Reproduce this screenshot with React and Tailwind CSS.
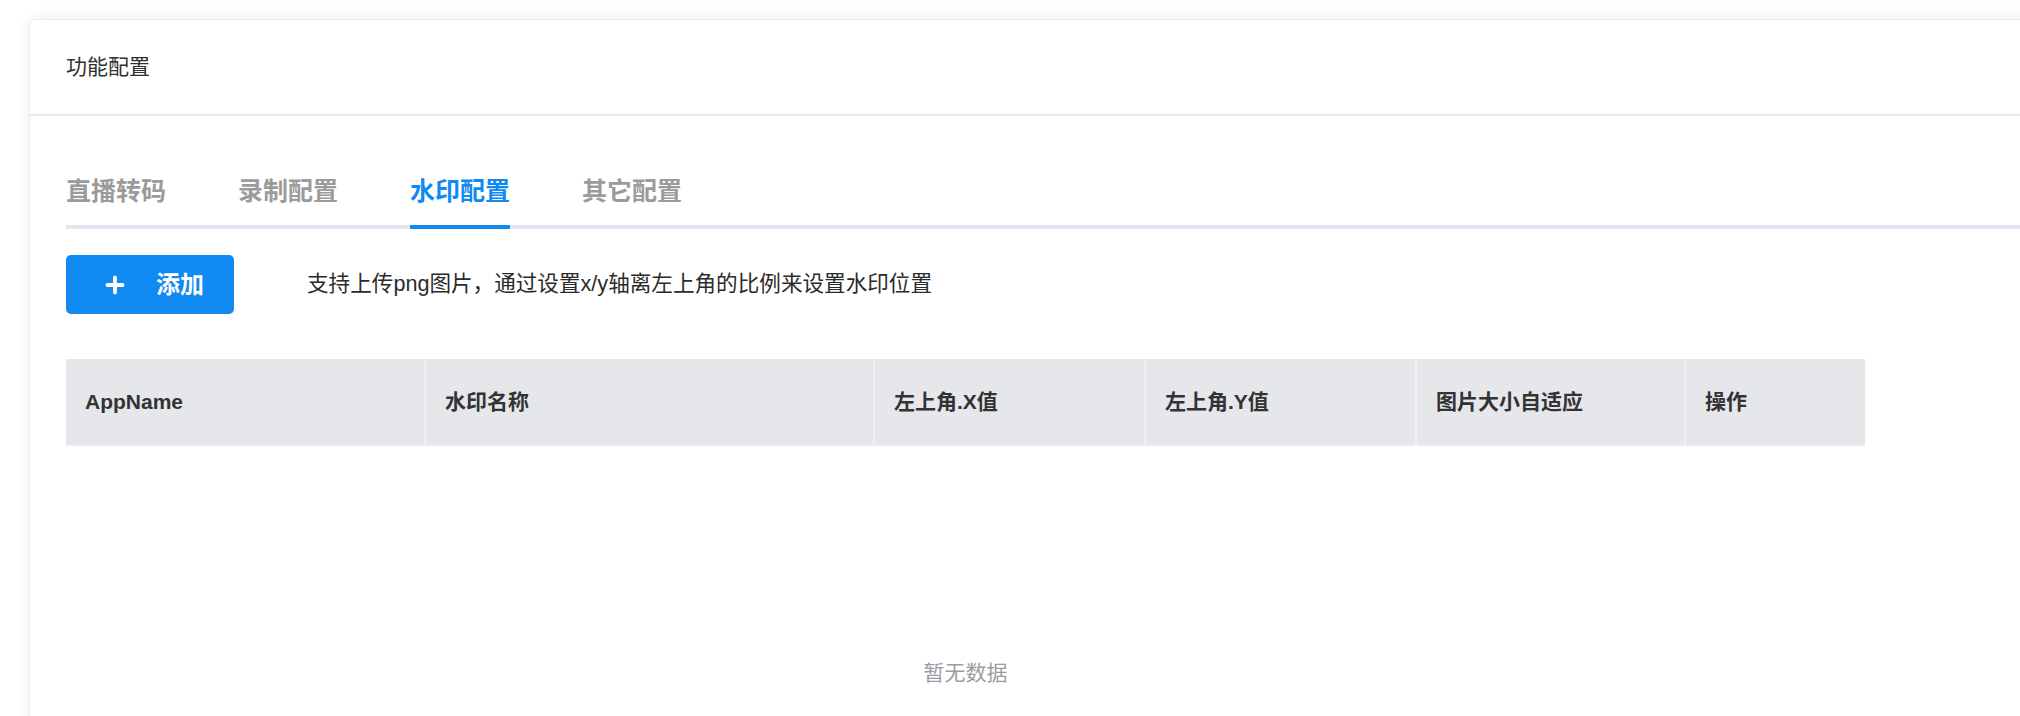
import { Plus } from "lucide-react";

const tabs = ["直播转码", "录制配置", "水印配置", "其它配置"];

const columns = [
  { label: "AppName", width: "w-[358px]" },
  { label: "水印名称", width: "w-[449px]" },
  { label: "左上角.X值", width: "w-[271px]" },
  { label: "左上角.Y值", width: "w-[271px]" },
  { label: "图片大小自适应", width: "w-[269px]" },
  { label: "操作", width: "flex-1" },
];

function Tabs({ active }) {
  return (
    <div className="flex gap-[72px] border-b-[4px] border-[#e4e6ef] pt-[57px]">
      {tabs.map((tab) => (
        <div
          key={tab}
          className={
            tab === active
              ? "-mb-[4px] border-b-[4px] border-[#1089f0] pb-[16px] text-[25px] leading-[36px] font-semibold text-[#1089f0]"
              : "-mb-[4px] border-b-[4px] border-transparent pb-[16px] text-[25px] leading-[36px] font-semibold text-[#9b9b9b]"
          }
        >
          {tab}
        </div>
      ))}
    </div>
  );
}

function WatermarkTable() {
  return (
    <div className="mt-[45px] w-[1799px]">
      <div className="flex h-[87px] border-b border-[#eef0f4] bg-[#e6e7eb]">
        {columns.map((col, i) => (
          <div
            key={col.label}
            className={
              "flex items-center pl-[19px] text-[21px] font-bold text-[#333] " +
              col.width +
              (i > 0 ? " border-l-2 border-[#eef0f3]" : "")
            }
          >
            {col.label}
          </div>
        ))}
      </div>
      <div className="pt-[211px] text-center text-[21px] leading-[32px] text-[#9a9ca3]">
        暂无数据
      </div>
    </div>
  );
}

export default function App() {
  return (
    <div
      className="h-[716px] overflow-hidden bg-white pt-[19px] pl-[29px]"
      style={{ fontFamily: '"Liberation Sans", "Noto Sans CJK SC", sans-serif' }}
    >
      <div className="mr-[-40px] h-[800px] rounded-[6px] border border-[#e9ecf2] bg-white shadow-[0_0_18px_rgba(0,0,0,0.07)]">
        <div className="flex h-[96px] items-center border-b-2 border-[#e8ecf2] pl-[36px] text-[21px] text-[#303030]">
          功能配置
        </div>
        <div className="pl-[36px]">
          <Tabs active="水印配置" />
          <div className="mt-[26px] flex items-center">
            <button
              type="button"
              className="flex h-[59px] w-[168px] items-center gap-[28px] rounded-[5px] bg-[#1089f0] pl-[36px] text-[24px] font-semibold text-white"
            >
              <Plus size={26} strokeWidth={3.5} />
              添加
            </button>
            <span className="ml-[73px] text-[21.6px] text-[#2b2b2b]">
              支持上传png图片，通过设置x/y轴离左上角的比例来设置水印位置
            </span>
          </div>
          <WatermarkTable />
        </div>
      </div>
    </div>
  );
}
